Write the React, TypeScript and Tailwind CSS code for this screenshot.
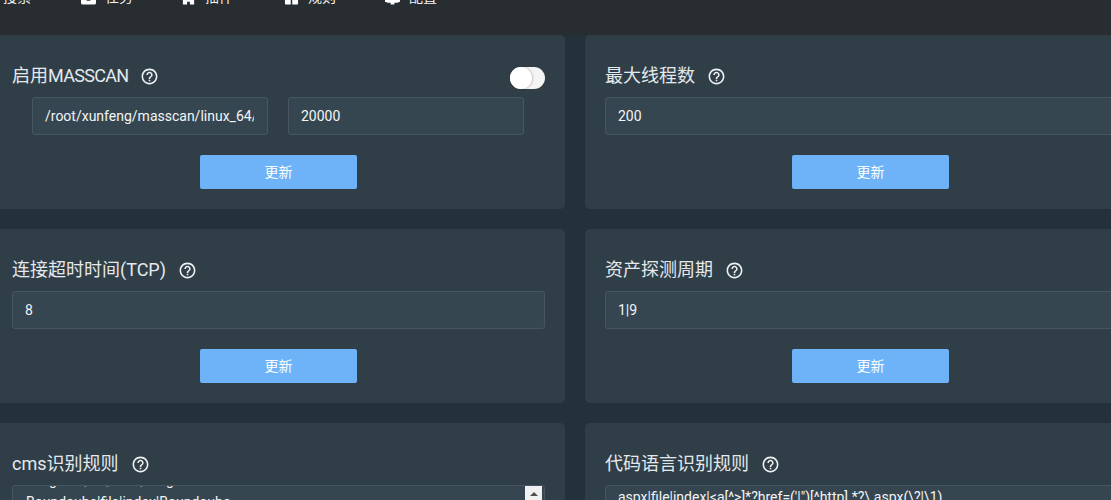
import type { ReactNode } from "react";

const font = "font-['Roboto','Noto_Sans_CJK_SC',sans-serif]";

function HelpIcon() {
  return (
    <svg viewBox="0 0 24 24" className="size-[19px] fill-[#eef2f4]">
      <path d="M11 18h2v-2h-2v2zm1-16C6.48 2 2 6.48 2 12s4.48 10 10 10 10-4.48 10-10S17.52 2 12 2zm0 18c-4.41 0-8-3.59-8-8s3.59-8 8-8 8 3.59 8 8-3.59 8-8 8zm0-14c-2.21 0-4 1.79-4 4h2c0-1.1.9-2 2-2s2 .9 2 2c0 2-3 1.75-3 5h2c0-2.25 3-2.5 3-5 0-2.21-1.79-4-4-4z" />
    </svg>
  );
}

function Title({ text }: { text: ReactNode }) {
  return (
    <div className="flex h-[22px] items-center gap-[12px] text-lg text-[#e4e9ec]">
      <span>{text}</span>
      <HelpIcon />
    </div>
  );
}

function Input({ value, className = "" }: { value: string; className?: string }) {
  return (
    <div
      className={`flex h-[38px] items-center overflow-hidden whitespace-nowrap rounded-[3px] border border-[#46555f] bg-[#364650] pl-[12px] pr-[13px] text-sm text-[#f2f5f6] ${className}`}
    >
      <span className="block w-full overflow-hidden">{value}</span>
    </div>
  );
}

function UpdateButton() {
  return (
    <div className="mt-5 flex justify-center">
      <button
        type="button"
        className="h-[34px] w-[157px] rounded-[2px] bg-[#6eb3f7] text-sm text-white"
      >
        更新
      </button>
    </div>
  );
}

function Card({ children }: { children: ReactNode }) {
  return <div className="h-[174px] rounded-[5px] bg-[#303e48] px-5 pt-[30px]">{children}</div>;
}

function NavItem({ label, icon, className }: { label: string; icon?: ReactNode; className: string }) {
  return (
    <div className={`flex items-center gap-[9px] text-sm text-[#f5f5f5] ${className}`}>
      {icon}
      <span>{label}</span>
    </div>
  );
}

const navIcon = "h-[16px] w-[15px] fill-white";

export default function App() {
  return (
    <div className={`h-[500px] w-[1111px] overflow-hidden bg-[#25313a] ${font}`}>
      <header className="h-[35px] overflow-hidden bg-[#272d30]">
        <div className="-mt-[13px] flex h-[20px] items-center pl-[3px]">
          <NavItem label="搜索" className="w-[78px]" />
          <NavItem
            label="任务"
            className="w-[100px]"
            icon={
              <svg viewBox="0 0 16 16" className={navIcon}>
                <path
                  fillRule="evenodd"
                  d="M2 0h12a2 2 0 0 1 2 2v12a2 2 0 0 1-2 2H2a2 2 0 0 1-2-2V2a2 2 0 0 1 2-2zM6 10v2h4v-2z"
                />
              </svg>
            }
          />
          <NavItem
            label="插件"
            className="w-[103px]"
            icon={
              <svg viewBox="0 0 16 16" className={navIcon}>
                <path d="M8 0 0 7v1h2v8h4.5v-3h3v3H14V8h2V7z" />
              </svg>
            }
          />
          <NavItem
            label="规则"
            className="w-[101px]"
            icon={
              <svg viewBox="0 0 16 16" className={navIcon}>
                <path d="M1 0h6.2v16H2a1 1 0 0 1-1-1zM8.8 0H15v15a1 1 0 0 1-1 1H8.8z" />
              </svg>
            }
          />
          <NavItem
            label="配置"
            className="w-[60px]"
            icon={
              <svg viewBox="0 0 16 16" className={navIcon}>
                <path d="M5 0h6v3h5v10l-3 1h-3v2H6v-2H3l-3-1V3h5z" />
              </svg>
            }
          />
        </div>
      </header>

      <main className="-ml-2 grid w-[1164px] grid-cols-[573px_571px] gap-5">
        <Card>
          <div className="flex items-start justify-between">
            <Title
              text={
                <>
                  启用<span className="tracking-[-0.7px]">MASSCAN</span>
                </>
              }
            />
            <div className="relative top-[2px] h-[22px] w-[35px] rounded-full bg-[#f4f4f4]">
              <div className="size-[22px] rounded-full bg-white shadow-[1px_0_2px_rgba(0,0,0,0.2)]" />
            </div>
          </div>
          <div className="ml-5 mt-[10px] flex gap-5">
            <Input value="/root/xunfeng/masscan/linux_64/masscan" className="w-[236px]" />
            <Input value="20000" className="w-[236px]" />
          </div>
          <UpdateButton />
        </Card>
        <Card>
          <Title text="最大线程数" />
          <Input value="200" className="mt-[10px]" />
          <UpdateButton />
        </Card>
        <Card>
          <Title text="连接超时时间(TCP)" />
          <Input value="8" className="mt-[10px]" />
          <UpdateButton />
        </Card>
        <Card>
          <Title text="资产探测周期" />
          <Input value="1|9" className="mt-[10px]" />
          <UpdateButton />
        </Card>
        <Card>
          <Title text="cms识别规则" />
          <div className="mt-[10px] flex h-[100px] overflow-hidden rounded-[3px] border border-[#46555f] bg-[#364650] pl-[13px] text-sm leading-[22px] text-[#f2f5f6]">
            <div className="-mt-[17px] flex-1 overflow-hidden whitespace-nowrap">
              <div>Tangmail|file|hosh|Tangmail</div>
              <div>Boundoube|file|index|Boundoube</div>
            </div>
            <div className="flex h-full w-[17px] flex-col items-center bg-[#f1f1f1] pt-[6px]">
              <div className="h-0 w-0 border-x-[4px] border-b-[4px] border-x-transparent border-b-[#505050]" />
            </div>
            <div className="w-[2px]" />
          </div>
        </Card>
        <Card>
          <Title text="代码语言识别规则" />
          <div className="mt-[10px] h-[100px] overflow-hidden whitespace-nowrap rounded-[3px] border border-[#46555f] bg-[#364650] pl-[12px] pt-[1px] text-sm leading-5 text-[#f2f5f6]">
            {"aspx|file|index|<a[^>]*?href=('|\")[^http].*?\\.aspx(\\?|\\1)"}
          </div>
        </Card>
      </main>
    </div>
  );
}
